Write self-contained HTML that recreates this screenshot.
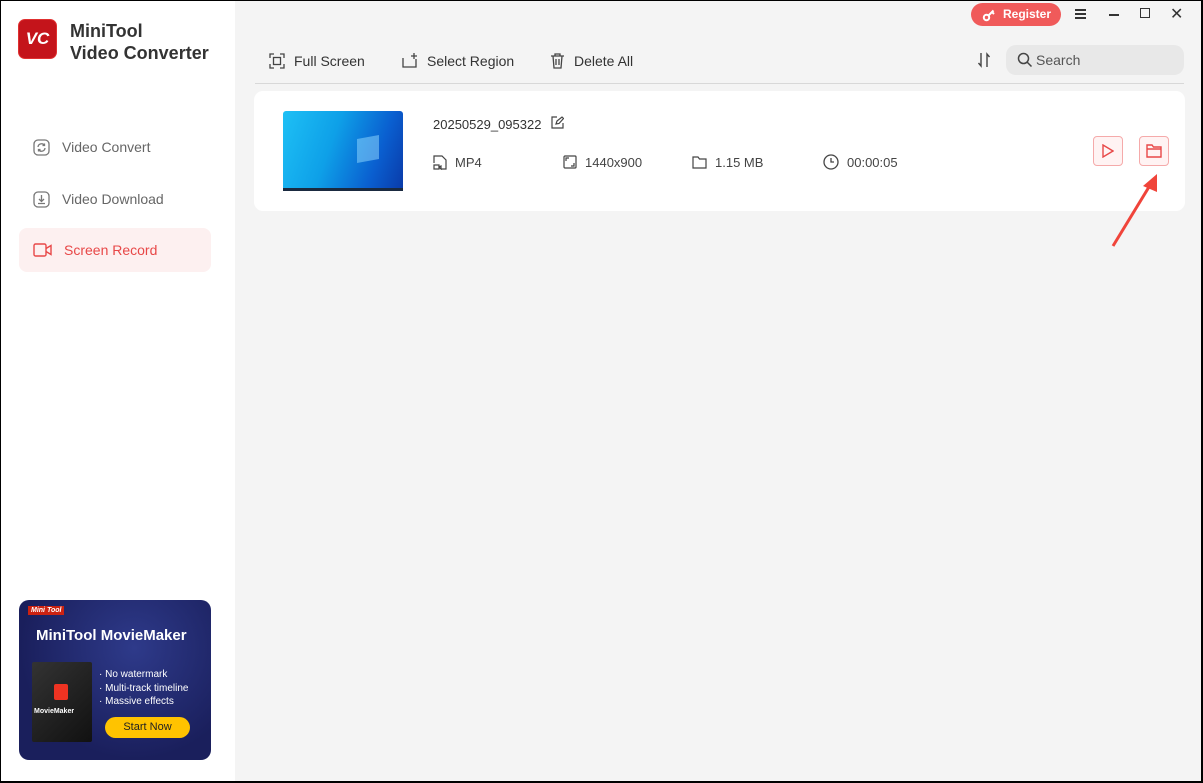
<!DOCTYPE html>
<html><head><meta charset="utf-8"><style>
*{margin:0;padding:0;box-sizing:border-box}
body{width:1203px;height:783px;overflow:hidden;font-family:"Liberation Sans",sans-serif;background:#f4f4f4;position:relative;}
.abs{position:absolute}
.side{left:0;top:0;width:235px;height:783px;background:#fff}
.nav{left:19px;width:192px;height:44px;border-radius:8px;font-size:14px;color:#666;display:flex;align-items:center;padding-left:14px}
.nav svg{margin-right:12px}
.tb{font-size:14px;color:#333;display:flex;align-items:center;top:52px;height:18px}
.tb svg{margin-right:9px}
.meta{font-size:13px;color:#444;display:flex;align-items:center;top:154px;height:16px}
.meta svg{margin-right:8px}
</style></head><body>
<div class="abs side"></div>
<div class="abs" style="left:18px;top:19px;width:39px;height:40px;border-radius:7px;background:#c4141b;border:1px solid #e03030;color:#fff;font-weight:bold;font-size:17px;font-style:italic;display:flex;align-items:center;justify-content:center">VC</div>
<div class="abs" style="left:70px;top:20px;font-size:18px;font-weight:bold;color:#333;line-height:22px">MiniTool<br>Video Converter</div>
<div class="abs nav" style="top:125px"><svg width="17" height="17" viewBox="0 0 17 17" fill="none" stroke="#777" stroke-width="1.3"><rect x="1" y="1" width="15" height="15" rx="4"/><path d="M5 8a3.5 3.5 0 0 1 6.5-1.5M12 9a3.5 3.5 0 0 1-6.5 1.5M11.5 4.5v2h-2M5.5 12.5v-2h2"/></svg>Video Convert</div>
<div class="abs nav" style="top:177px"><svg width="17" height="17" viewBox="0 0 17 17" fill="none" stroke="#777" stroke-width="1.3"><rect x="1" y="1" width="15" height="15" rx="4"/><path d="M8.5 4v6M6 8l2.5 2.5L11 8M5 12.5h7"/></svg>Video Download</div>
<div class="abs nav" style="top:228px;background:#fdf0f0;color:#e84848"><svg width="19" height="14" viewBox="0 0 19 14" fill="none" stroke="#e84848" stroke-width="1.4"><rect x="1" y="1" width="12" height="12" rx="1.5"/><path d="M13 5.5l5-3v9l-5-3"/></svg>Screen Record</div>
<div class="abs" style="left:19px;top:600px;width:192px;height:160px;border-radius:10px;background:radial-gradient(ellipse at 60% 30%,#2e3a8a,#1a1f5c 70%);overflow:hidden">
<div class="abs" style="left:9px;top:6px;background:#c21;color:#fff;font-size:7px;font-weight:bold;font-style:italic;padding:1px 3px">Mini Tool</div>
<div class="abs" style="left:17px;top:27px;color:#fff;font-size:15px;font-weight:bold">MiniTool MovieMaker</div>
<div class="abs" style="left:13px;top:62px;width:60px;height:80px;background:linear-gradient(135deg,#333,#111);border-radius:2px"><div class="abs" style="left:22px;top:22px;width:14px;height:16px;background:#e32;border-radius:2px"></div><div class="abs" style="left:2px;top:46px;color:#fff;font-size:7px;font-weight:bold">MovieMaker</div></div>
<div class="abs" style="left:80px;top:68px;color:#fff;font-size:10px;line-height:13.5px">· No watermark<br>· Multi-track timeline<br>· Massive effects</div>
<div class="abs" style="left:86px;top:117px;width:85px;height:21px;border-radius:11px;background:#ffc300;color:#222;font-size:11px;text-align:center;line-height:21px">Start Now</div>
</div>
<div class="abs" style="left:971px;top:3px;width:90px;height:23px;border-radius:12px;background:#f05a5a;color:#fff;font-size:12px;font-weight:bold;line-height:23px;padding-left:32px">Register</div>
<svg class="abs" style="left:982px;top:8px" width="14" height="14" viewBox="0 0 14 14" fill="none" stroke="#fff" stroke-width="2"><circle cx="4.5" cy="9.5" r="2.7"/><path d="M6.5 7.5l5-5M10 4l2 2"/></svg>
<div class="abs" style="left:1075px;top:9px;width:11px;height:2px;background:#333;box-shadow:0 4px #333,0 8px #333"></div>
<div class="abs" style="left:1109px;top:14px;width:10px;height:2px;background:#333"></div>
<div class="abs" style="left:1140px;top:8px;width:10px;height:10px;border:1.5px solid #333"></div>
<div class="abs" style="left:1170px;top:4px;font-size:16px;color:#333">✕</div>
<div class="abs tb" style="left:269px"><svg width="16" height="16" viewBox="0 0 16 16" fill="none" stroke="#444" stroke-width="1.3"><path d="M1 5V1h4M11 1h4v4M15 11v4h-4M5 15H1v-4"/><rect x="4.5" y="4.5" width="7" height="7"/></svg>Full Screen</div>
<div class="abs tb" style="left:402px"><svg width="16" height="16" viewBox="0 0 16 16" fill="none" stroke="#444" stroke-width="1.3"><path d="M1 5v9h13V6M9 3h6M12 0v6"/></svg>Select Region</div>
<div class="abs tb" style="left:550px"><svg width="15" height="16" viewBox="0 0 15 16" fill="none" stroke="#444" stroke-width="1.3"><path d="M1 3h13M5 3V1h5v2M3 3l1 12h7l1-12M6 6v6M9 6v6"/></svg>Delete All</div>
<svg class="abs" style="left:977px;top:52px" width="14" height="16" viewBox="0 0 14 16" fill="none" stroke="#444" stroke-width="1.4"><path d="M4 1v13l-2.5-3M10 15V2l2.5 3"/></svg>
<div class="abs" style="left:1006px;top:45px;width:178px;height:30px;border-radius:10px;background:#e8e8e8;font-size:14px;color:#555;line-height:30px;padding-left:30px">Search</div>
<svg class="abs" style="left:1017px;top:52px" width="16" height="16" viewBox="0 0 16 16" fill="none" stroke="#444" stroke-width="1.5"><circle cx="6.5" cy="6.5" r="5"/><path d="M10 10l4.5 4.5"/></svg>
<div class="abs" style="left:255px;top:83px;width:929px;height:1px;background:#d8d8d8"></div>
<div class="abs" style="left:254px;top:91px;width:931px;height:120px;border-radius:9px;background:#fff"></div>
<div class="abs" style="left:283px;top:111px;width:120px;height:80px;border-radius:3px;background:linear-gradient(110deg,#1ec0f5 0%,#0ea0e8 40%,#0a5fd0 75%,#0a3aa8 100%)"><div class="abs" style="left:0;bottom:0;width:120px;height:3px;background:#1a2a40"></div><div class="abs" style="left:74px;top:26px;width:22px;height:24px;background:rgba(150,220,255,.5);transform:skewY(-10deg)"></div></div>
<div class="abs" style="left:433px;top:117px;font-size:13px;color:#333">20250529_095322</div>
<svg class="abs" style="left:551px;top:116px" width="13" height="13" viewBox="0 0 13 13" fill="none" stroke="#444" stroke-width="1.2"><path d="M6 1H1v11h11V7M5 8l1-3 5-4 1.5 1.5-4.5 5z"/></svg>
<div class="abs meta" style="left:433px"><svg width="14" height="15" viewBox="0 0 14 15" fill="none" stroke="#444" stroke-width="1.2"><path d="M1 8V1h8l4 4v9H8M1 10h5v4H1zM6 12l2-1v3z"/></svg>MP4</div>
<div class="abs meta" style="left:563px"><svg width="14" height="14" viewBox="0 0 14 14" fill="none" stroke="#444" stroke-width="1.2"><rect x="1" y="1" width="12" height="12" rx="1"/><path d="M3 6V3h3M11 8v3H8"/></svg>1440x900</div>
<div class="abs meta" style="left:692px"><svg width="15" height="13" viewBox="0 0 15 13" fill="none" stroke="#444" stroke-width="1.2"><path d="M1 1h5l1.5 2H14v9H1z"/></svg>1.15 MB</div>
<div class="abs meta" style="left:823px"><svg width="16" height="16" viewBox="0 0 16 16" fill="none" stroke="#444" stroke-width="1.3"><circle cx="8" cy="8" r="7"/><path d="M8 4v4h3"/></svg>00:00:05</div>
<div class="abs" style="left:1093px;top:136px;width:30px;height:30px;border-radius:4px;border:1px solid #f5aaaa;background:#fff3f3"></div>
<svg class="abs" style="left:1102px;top:144px" width="12" height="14" viewBox="0 0 12 14" fill="none" stroke="#e84848" stroke-width="1.4"><path d="M1 1l10 6-10 6z"/></svg>
<div class="abs" style="left:1139px;top:136px;width:30px;height:30px;border-radius:4px;border:1px solid #f5aaaa;background:#fff3f3"></div>
<svg class="abs" style="left:1146px;top:144px" width="16" height="14" viewBox="0 0 16 14" fill="none" stroke="#e84848" stroke-width="1.4"><path d="M1 1h5l1.5 2H15v10H1zM1 5h14"/></svg>
<svg class="abs" style="left:1105px;top:170px" width="60" height="80" viewBox="0 0 60 80"><path d="M8 76L47 12" stroke="#f0443a" stroke-width="3"/><path d="M52 4L38 16l14 6z" fill="#f0443a"/></svg>
<div class="abs" style="left:0;top:0;width:1203px;height:783px;border:1px solid #000;border-right-width:2px;border-bottom-width:2px;pointer-events:none"></div>
</body></html>
